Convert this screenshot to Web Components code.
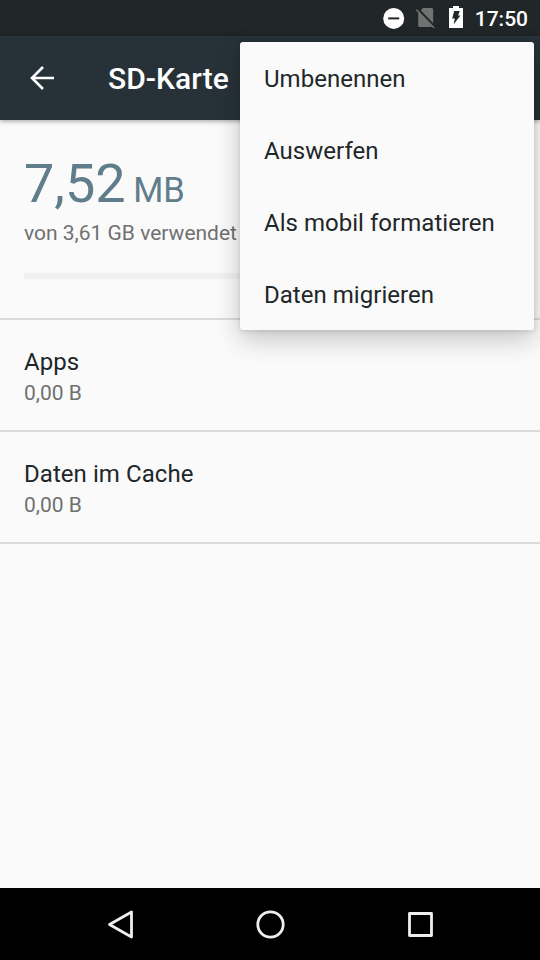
<!DOCTYPE html>
<html lang="de">
<head>
<meta charset="utf-8">
<title>SD-Karte</title>
<style>
html, body { margin: 0; height: 100%; }
body { font-family: Roboto, "Noto Sans", sans-serif; overflow: hidden; }
</style>
</head>
<body>
<storage-screen></storage-screen>
<script>
const define = (name, html) => {
  const template = document.createElement('template');
  template.innerHTML = html;
  customElements.define(name, class extends HTMLElement {
    constructor() {
      super();
      this.attachShadow({ mode: 'open' }).append(template.content.cloneNode(true));
    }
  });
};

define('status-bar', `
<style>
:host { display: flex; align-items: center; justify-content: flex-end; box-sizing: border-box; height: 36px; padding-right: 12px; background: #212729; color: #fff; flex: none; }
svg { display: block; flex: none; }
.dnd { margin-right: 11px; }
.sim { margin-right: 13px; }
.bat { margin: 0 12px 2px 0; }
span { font-size: 21px; font-weight: 500; line-height: 36px; padding-top: 2px; box-sizing: border-box; height: 38px; }
</style>
<svg class="dnd" width="22" height="22" viewBox="0 0 22 22"><circle cx="10.7" cy="11.4" r="10.5" fill="#fff"/><path d="M5.2 11.4h11" stroke="#212729" stroke-width="2"/></svg>
<svg class="sim" width="20" height="22" viewBox="0 0 20 22"><path d="M7 1H15.6q1.6 0 1.6 1.6v14.6L4.6 3.5zM2.2 5V18.4q0 1.6 1.6 1.6H16.4z" fill="#707372"/><path d="M.5 2.6l17.7 18.2" stroke="#707372" stroke-width="1.7"/><path d="M1.6 1.4l17.7 18.2" stroke="#212729" stroke-width="1.7"/></svg>
<svg class="bat" width="14" height="22" viewBox="0 0 14 22"><path d="M4 0h6v2h4v20H0V2h4z" fill="#fff"/><path d="M5.2 5h5.6L9 9.4h2.4L4.6 18.6l1.2-6H3.2z" fill="#212729"/></svg>
<span><slot></slot></span>`);

define('app-bar', `
<style>
:host { display: flex; align-items: center; box-sizing: border-box; height: 84px; padding-left: 30px; background: #263238; color: #fff; flex: none; box-shadow: 0 1px 5px rgba(0,0,0,.38); }
svg { display: block; margin-right: 54px; }
h1 { margin: 0; padding-top: 2px; font-size: 30px; font-weight: 500; line-height: 36px; letter-spacing: .05px; }
</style>
<svg width="24" height="24" viewBox="0 0 24 24" fill="none" stroke="#fff" stroke-width="2.6"><path d="M24 12H2.5M13 1 2 12l11 11"/></svg>
<h1><slot></slot></h1>`);

define('storage-summary', `
<style>
:host { display: block; box-sizing: border-box; height: 200px; padding: 32px 24px 0; border-bottom: 2px solid #dbdbdb; }
.amount { display: flex; align-items: baseline; gap: 7.5px; height: 64px; color: #607d8b; font-size: 54px; line-height: 64px; white-space: nowrap; }
.unit { font-size: 34.5px; }
.detail { color: #6f7070; font-size: 21px; line-height: 25px; margin-top: 5px; }
.track { height: 6px; margin-top: 27px; background: #f0f0f0; }
</style>
<div class="amount"><slot name="value"></slot><span class="unit"><slot name="unit"></slot></span></div>
<div class="detail"><slot></slot></div>
<div class="track"></div>`);

define('storage-row', `
<style>
:host { display: flex; flex-direction: column; box-sizing: border-box; height: 112px; padding: 28px 24px 0; border-bottom: 2px solid #dbdbdb; }
.title { color: #212729; font-size: 24px; line-height: 28px; letter-spacing: .06px; }
.size { color: #6f7070; font-size: 21px; line-height: 25px; margin-top: 5px; }
</style>
<div class="title"><slot></slot></div>
<div class="size"><slot name="size"></slot></div>`);

define('popup-item', `
<style>
:host { display: flex; align-items: center; box-sizing: border-box; height: 72px; padding: 2px 24px 0; color: #212729; font-size: 24px; line-height: 28px; white-space: nowrap; letter-spacing: .03px; }
</style>
<slot></slot>`);

define('popup-menu', `
<style>
:host { display: block; position: absolute; top: 42px; right: 6px; width: 294px; background: #fafafa; border-radius: 3px; box-shadow: 0 9px 26px rgba(0,0,0,.22), 0 1px 5px rgba(0,0,0,.12); }
</style>
<slot></slot>`);

define('nav-bar', `
<style>
:host { display: flex; align-items: center; justify-content: center; height: 72px; background: #000; flex: none; }
svg { display: block; width: 150px; height: 72px; fill: none; stroke: #eee; stroke-width: 2.8; stroke-linejoin: round; }
</style>
<svg viewBox="0 0 150 72"><path d="M64.5 36.5 86.5 24v25z"/></svg>
<svg viewBox="0 0 150 72"><circle cx="75.5" cy="36.5" r="12.7"/></svg>
<svg viewBox="0 0 150 72"><path d="M64.5 25.5h22v22h-22z"/></svg>`);

define('storage-screen', `
<style>
:host { display: flex; flex-direction: column; position: relative; width: 540px; height: 960px; background: #fafafa; overflow: hidden; }
main { flex: 1; }
</style>
<status-bar>17:50</status-bar>
<app-bar>SD-Karte</app-bar>
<main>
<storage-summary><span slot="value">7,52</span><span slot="unit">MB</span>von 3,61 GB verwendet</storage-summary>
<storage-row>Apps<span slot="size">0,00 B</span></storage-row>
<storage-row>Daten im Cache<span slot="size">0,00 B</span></storage-row>
</main>
<nav-bar></nav-bar>
<popup-menu>
<popup-item>Umbenennen</popup-item>
<popup-item>Auswerfen</popup-item>
<popup-item>Als mobil formatieren</popup-item>
<popup-item>Daten migrieren</popup-item>
</popup-menu>`);
</script>
</body>
</html>
